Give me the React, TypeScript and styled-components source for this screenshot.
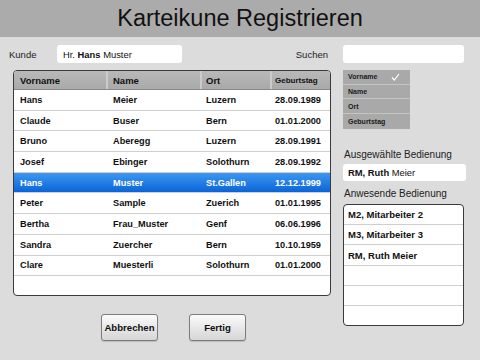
import React from "react";
import styled, { createGlobalStyle } from "styled-components";

const GlobalStyle = createGlobalStyle`
  * { margin: 0; padding: 0; box-sizing: border-box; }
  html, body {
    width: 480px;
    height: 360px;
    overflow: hidden;
    background: #dcdcdc;
    font-family: "Liberation Sans", Arial, Helvetica, sans-serif;
    color: #111;
  }
`;

const Page = styled.div`
  width: 480px;
  height: 360px;
  display: flex;
  flex-direction: column;
`;

const Header = styled.header`
  height: 37px;
  background: #ababab;
  display: flex;
  align-items: center;
  justify-content: center;
`;

const Title = styled.h1`
  font-size: 23.5px;
  font-weight: 400;
  line-height: 37px;
  color: #111;
`;

const TopRow = styled.div`
  display: flex;
  align-items: center;
  height: 18px;
  margin-top: 8px;
  padding: 0 16px 0 9px;
`;

const Label = styled.span<{ $w?: number }>`
  font-size: 9.5px;
  color: #222;
  width: ${(p) => (p.$w ? `${p.$w}px` : "auto")};
`;

const Field = styled.div<{ $w: number }>`
  width: ${(p) => p.$w}px;
  height: 18px;
  background: #fff;
  border-radius: 3px;
  font-size: 9.4px;
  display: flex;
  align-items: center;
  padding-left: 6px;
  white-space: pre;
  b { font-weight: 700; }
`;

const SearchGroup = styled.div`
  margin-left: auto;
  display: flex;
  align-items: center;
  gap: 15px;
`;

const Content = styled.div`
  display: flex;
  margin-top: 7px;
  padding-left: 13px;
`;

const LeftCol = styled.div`
  width: 318px;
  display: flex;
  flex-direction: column;
`;

const Table = styled.div`
  height: 226px;
  background: #fff;
  border: 1px solid #3a3a3a;
  border-radius: 4px;
  overflow: hidden;
`;

const Row = styled.div<{ $head?: boolean; $sel?: boolean }>`
  display: grid;
  grid-template-columns: 94px 94px 70px 1fr;
  align-items: center;
  height: ${(p) => (p.$head ? "19px" : "20.7px")};
  border-bottom: ${(p) => (p.$head ? "1px solid #8a8a8a" : "1.5px solid #cfcfcf")};
  background: ${(p) =>
    p.$head
      ? "linear-gradient(#b9b9b9, #a9a9a9)"
      : p.$sel
      ? "linear-gradient(#3c98f2, #0a64d8)"
      : "#fff"};
  color: ${(p) => (p.$sel ? "#fff" : "#111")};
  font-weight: 700;
`;

const Cell = styled.div<{ $pad: number; $head?: boolean; $small?: boolean }>`
  height: 100%;
  display: flex;
  align-items: center;
  padding-left: ${(p) => p.$pad}px;
  font-size: ${(p) => (p.$small ? "8px" : p.$head ? "9.5px" : "9.2px")};
  white-space: nowrap;
  border-right: ${(p) => (p.$head ? "2px solid #cbcbcb" : "none")};
  &:last-child { border-right: none; }
`;

const ButtonRow = styled.div`
  display: flex;
  justify-content: center;
  gap: 31px;
  margin-top: 18px;
  padding-left: 3px;
`;

const Button = styled.button`
  width: 57px;
  height: 27px;
  border: 1px solid #7c7c7c;
  border-radius: 3px;
  background: linear-gradient(#fbfbfb, #e6e6e6 55%, #d6d6d6);
  font-family: inherit;
  font-size: 9.6px;
  font-weight: 700;
  color: #111;
  box-shadow: 0 1px 1px rgba(0, 0, 0, 0.15);
`;

const RightCol = styled.div`
  margin-left: 12px;
  width: 123px;
  display: flex;
  flex-direction: column;
`;

const SortList = styled.div`
  width: 67px;
  background: #a9a9a9;
  display: flex;
  flex-direction: column;
`;

const SortItem = styled.div`
  height: 14.7px;
  display: flex;
  align-items: center;
  justify-content: space-between;
  padding: 0 10px 0 5px;
  font-size: 7px;
  font-weight: 700;
  color: #1a1a1a;
  border-bottom: 1px solid #c4c4c4;
  &:last-child { border-bottom: none; height: 15px; }
`;

const SectionLabel = styled.div<{ $mt: number }>`
  margin-top: ${(p) => p.$mt}px;
  font-size: 10px;
  line-height: 12px;
  color: #222;
  margin-left: 1px;
`;

const SelectedBox = styled.div`
  margin-top: 3px;
  height: 17px;
  background: #fff;
  border-radius: 3px;
  display: flex;
  align-items: center;
  padding-left: 5px;
  font-size: 9.4px;
  white-space: pre;
  b { font-weight: 700; }
`;

const PresentList = styled.div`
  margin-top: 4px;
  width: 121px;
  height: 122px;
  background: #fff;
  border: 1px solid #3a3a3a;
  border-radius: 4px;
  overflow: hidden;
`;

const PresentItem = styled.div`
  height: 20.2px;
  display: flex;
  align-items: center;
  padding-left: 4px;
  font-size: 9.5px;
  font-weight: 700;
  border-bottom: 1.5px solid #cfcfcf;
  &:last-child { border-bottom: none; }
`;

const people = [
  ["Hans", "Meier", "Luzern", "28.09.1989"],
  ["Claude", "Buser", "Bern", "01.01.2000"],
  ["Bruno", "Aberegg", "Luzern", "28.09.1991"],
  ["Josef", "Ebinger", "Solothurn", "28.09.1992"],
  ["Hans", "Muster", "St.Gallen", "12.12.1999"],
  ["Peter", "Sample", "Zuerich", "01.01.1995"],
  ["Bertha", "Frau_Muster", "Genf", "06.06.1996"],
  ["Sandra", "Zuercher", "Bern", "10.10.1959"],
  ["Clare", "Muesterli", "Solothurn", "01.01.2000"],
];

const pads = [6, 5, 4, 3];

const Check = () => (
  <svg width="9" height="8" viewBox="0 0 9 8">
    <path d="M1 4.5 L3.4 7 L8 1" stroke="#fff" strokeWidth="1.2" fill="none" />
  </svg>
);

export default function App() {
  return (
    <>
      <GlobalStyle />
      <Page>
        <Header>
          <Title>Karteikune Registrieren</Title>
        </Header>
        <TopRow>
          <Label $w={48}>Kunde</Label>
          <Field $w={125}>
            Hr. <b>Hans</b> Muster
          </Field>
          <SearchGroup>
            <Label>Suchen</Label>
            <Field $w={121} />
          </SearchGroup>
        </TopRow>
        <Content>
          <LeftCol>
            <Table>
              <Row $head>
                <Cell $head $pad={pads[0]}>Vorname</Cell>
                <Cell $head $pad={pads[1]}>Name</Cell>
                <Cell $head $pad={pads[2]}>Ort</Cell>
                <Cell $head $small $pad={pads[3]}>Geburtstag</Cell>
              </Row>
              {people.map((p, i) => (
                <Row key={i} $sel={i === 4}>
                  {p.map((v, j) => (
                    <Cell key={j} $pad={pads[j]}>{v}</Cell>
                  ))}
                </Row>
              ))}
            </Table>
            <ButtonRow>
              <Button>Abbrechen</Button>
              <Button>Fertig</Button>
            </ButtonRow>
          </LeftCol>
          <RightCol>
            <SortList>
              <SortItem>
                Vorname <Check />
              </SortItem>
              <SortItem>Name</SortItem>
              <SortItem>Ort</SortItem>
              <SortItem>Geburtstag</SortItem>
            </SortList>
            <SectionLabel $mt={20}>Ausgewählte Bedienung</SectionLabel>
            <SelectedBox>
              <b>RM, Ruth</b> Meier
            </SelectedBox>
            <SectionLabel $mt={7}>Anwesende Bedienung</SectionLabel>
            <PresentList>
              <PresentItem>M2, Mitarbeiter 2</PresentItem>
              <PresentItem>M3, Mitarbeiter 3</PresentItem>
              <PresentItem>RM, Ruth Meier</PresentItem>
              <PresentItem />
              <PresentItem />
              <PresentItem />
            </PresentList>
          </RightCol>
        </Content>
      </Page>
    </>
  );
}
